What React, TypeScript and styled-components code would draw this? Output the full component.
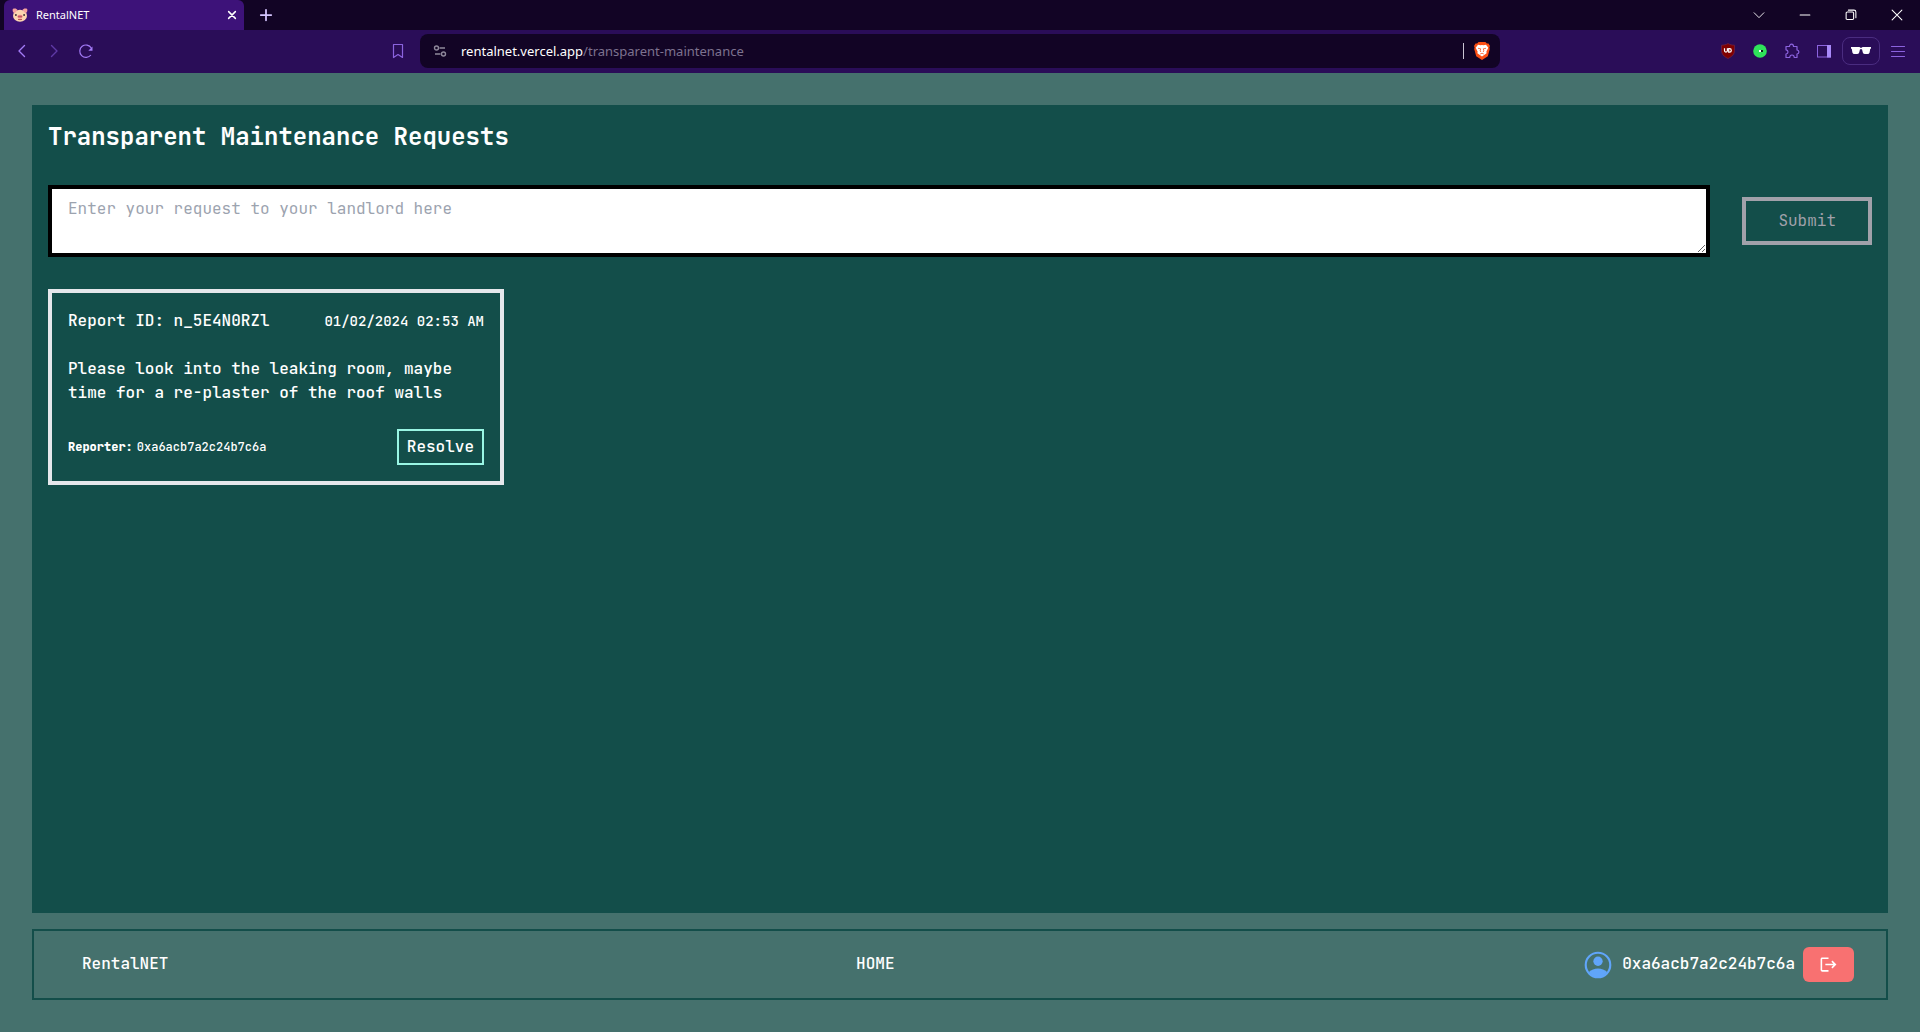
import React, { useState } from "react";
import styled, { createGlobalStyle } from "styled-components";
import { MdLogout } from "react-icons/md";

const mono = `"JetBrains Mono", "DejaVu Sans Mono", "Liberation Mono", monospace`;
const system = `"Segoe UI", "Noto Sans", "Open Sans", sans-serif`;

const GlobalStyle = createGlobalStyle`
  *, *::before, *::after { box-sizing: border-box; }
  body { margin: 0; background: #45716d; }
  button, textarea { font: inherit; color: inherit; }
  h1, p { margin: 0; }
`;

const Window = styled.div`
  display: flex;
  flex-direction: column;
  min-height: 100vh;
`;

/* Browser frame */

const TabStrip = styled.header`
  display: flex;
  align-items: stretch;
  height: 30px;
  padding-left: 4px;
  background: #120425;
  color: #fff;
  font-family: ${system};
`;

const Tab = styled.div`
  display: flex;
  align-items: center;
  gap: 8px;
  width: 240px;
  padding: 0 4px 0 8px;
  border-radius: 6px 6px 0 0;
  background: #3d1279;
  font-size: 11px;
  line-height: 16px;
`;

const TabTitle = styled.span`
  flex: 1;
`;

const FrameButton = styled.button<{ $width: number; $tone?: string }>`
  display: flex;
  align-items: center;
  justify-content: center;
  width: ${(p) => p.$width}px;
  height: 100%;
  padding: 0;
  border: 0;
  background: none;
  color: ${(p) => p.$tone ?? "#fff"};
`;

const WindowControls = styled.div`
  display: flex;
  margin-left: auto;
`;

const Toolbar = styled.nav`
  display: grid;
  grid-template-columns: 1fr minmax(0, 1080px) 1fr;
  align-items: center;
  height: 43px;
  padding-bottom: 1px;
  background: #2a0d58;
  font-family: ${system};
`;

const ToolGroup = styled.div<{ $end?: boolean }>`
  display: flex;
  align-items: center;
  justify-content: ${(p) => (p.$end ? "flex-end" : "flex-start")};
  height: 32px;
  padding: 0 6px;
`;

const Spacer = styled.span`
  flex: 1;
`;

const AddressBar = styled.div`
  display: flex;
  align-items: center;
  height: 34px;
  padding-left: 4px;
  border-radius: 8px;
  background: #120425;
`;

const Address = styled.div`
  flex: 1;
  padding-left: 5px;
  color: #7d728f;
  font-size: 13px;
  line-height: 20px;
  white-space: nowrap;
  overflow: hidden;
`;

const Host = styled.span`
  color: #fff;
`;

const Divider = styled.span`
  width: 1px;
  height: 16px;
  background: #c9c4d2;
`;

const PrivatePill = styled.button`
  display: flex;
  align-items: center;
  justify-content: center;
  width: 38px;
  height: 28px;
  margin: 0 2px;
  padding: 0;
  border: 1px solid #4a2c80;
  border-radius: 8px;
  background: none;
`;

/* Page */

const Page = styled.div`
  display: flex;
  flex: 1;
  flex-direction: column;
  gap: 16px;
  padding: 32px;
  color: #fff;
  font-family: ${mono};
  font-size: 16px;
  line-height: 24px;
`;

const Panel = styled.main`
  flex: 1;
  padding: 16px;
  background: #134e4a;
`;

const Title = styled.h1`
  font-size: 24px;
  line-height: 32px;
  font-weight: 700;
`;

const RequestForm = styled.form`
  display: flex;
  align-items: center;
  gap: 32px;
  margin: 32px 0;
`;

const RequestBox = styled.textarea`
  flex: 1;
  display: block;
  min-width: 0;
  padding: 8px 16px;
  border: 4px solid #000;
  border-radius: 0;
  background: #fff;
  color: #111827;
  resize: both;
  &::placeholder { color: #9ca3af; opacity: 1; }
`;

const SubmitButton = styled.button`
  padding: 8px 32px;
  border: 4px solid #a1a1aa;
  background: none;
  color: #a1a1aa;
`;

const Reports = styled.div`
  display: grid;
  grid-template-columns: repeat(4, minmax(0, 1fr));
`;

const Card = styled.article`
  display: flex;
  flex-direction: column;
  gap: 24px;
  padding: 16px;
  border: 4px solid #e5e7eb;
  font-weight: 500;
`;

const CardRow = styled.div`
  display: flex;
  align-items: center;
  justify-content: space-between;
`;

const ReportTime = styled.time`
  font-size: 14px;
`;

const Reporter = styled.p`
  display: flex;
  gap: 4px;
  font-size: 12px;
`;

const ReporterLabel = styled.strong`
  font-weight: 800;
`;

const ResolveButton = styled.button`
  padding: 4px 8px;
  border: 2px solid #99f6e4;
  background: none;
`;

const Footer = styled.footer`
  display: flex;
  align-items: center;
  justify-content: space-between;
  padding: 16px 32px;
  border: 2px solid #134e4a;
  font-weight: 500;
`;

const NavLink = styled.a<{ $inset?: boolean }>`
  margin-left: ${(p) => (p.$inset ? "16px" : "0")};
  padding-bottom: 1px;
  color: inherit;
  text-decoration: none;
`;

const Account = styled.div`
  display: flex;
  align-items: center;
  gap: 8px;
`;

const AccountName = styled.span`
  padding-bottom: 1px;
`;

const LogoutButton = styled.button`
  display: flex;
  padding: 8px 16px;
  border: 0;
  border-radius: 6px;
  background: #f87171;
`;

/* Icons */

type StrokeIconProps = { d: string; size?: number; width?: number; color?: string };

const StrokeIcon = ({ d, size = 16, width = 1, color = "currentColor" }: StrokeIconProps) => (
  <svg width={size} height={size} viewBox="0 0 16 16" fill="none" stroke={color} strokeWidth={width} strokeLinecap="round" strokeLinejoin="round" aria-hidden="true">
    <path d={d} />
  </svg>
);

const PigIcon = () => (
  <svg width="16" height="16" viewBox="0 0 16 16" aria-hidden="true">
    <ellipse cx="8" cy="8.800" rx="7" ry="6" fill="#fcd5b0" />
    <path d="M.8 2C2.500 1 5 1.600 5.500 3L2.500 6.500C.8 5.500.3 3.500.8 2zM15.200 2C13.500 1 11 1.600 10.500 3L13.500 6.500C15.200 5.500 15.700 3.500 15.200 2z" fill="#f5a3a0" />
    <ellipse cx="8" cy="9.600" rx="2.700" ry="1.800" fill="#e87f83" />
    <circle cx="7" cy="9.600" r=".6" fill="#8a2f3c" />
    <circle cx="9" cy="9.600" r=".6" fill="#8a2f3c" />
    <circle cx="3.900" cy="8" r=".9" fill="#33242c" />
    <circle cx="12.100" cy="8" r=".9" fill="#33242c" />
    <path d="M6 12.300q2 .8 4 0" stroke="#b9484f" fill="none" />
  </svg>
);

const ReloadIcon = () => (
  <svg width="16" height="16" viewBox="0 0 16 16" fill="none" aria-hidden="true">
    <path d="M12.900 12A6.200 6.200 0 1 1 13.300 5" stroke="#a37bf7" strokeWidth="1.200" />
    <path d="M14.500 3.500v4.200h-4.200z" fill="#a37bf7" />
  </svg>
);

const SiteIcon = () => (
  <svg width="14" height="14" viewBox="0 0 14 14" fill="none" stroke="#8f899b" strokeWidth="1.400" aria-hidden="true">
    <circle cx="3.500" cy="4" r="2" />
    <path d="M6.500 4H12M2 10h5.500" />
    <circle cx="10.500" cy="10" r="2" />
  </svg>
);

const BraveIcon = () => (
  <svg width="16" height="18" viewBox="0 0 16 18" aria-hidden="true">
    <path d="M4.600 0h6.800l1.500 1.500 1.600-.1L16 4l-.6 1.600.4 1.400-2 7.200L8 18l-5.800-3.800-2-7.200.4-1.400L0 4l1.500-2.600 1.600.1z" fill="#fb4f14" />
    <path d="M4 2.800 6.500 3.300 8 3l1.500.3L12 2.800l2.300 3-1.900 3.800.2 1.600-2.100 1.500L8 14.600l-2.500-1.900-2.100-1.500.2-1.600L1.700 5.800z" fill="#fff" />
    <path d="m4 6.300 2.700.5-.5 2 .7 1.200M12 6.300l-2.700.5.5 2-.7 1.200M6.200 12 8 11.200l1.800.8" stroke="#fb4f14" strokeWidth=".8" fill="none" />
  </svg>
);

const ShieldIcon = () => (
  <svg width="16" height="16" viewBox="0 0 16 16" fill="none" aria-hidden="true">
    <path d="M8 .5c2 1.300 4 1.600 6.500 1.700v5.300c0 3.700-2.500 6-6.500 8-4-2-6.500-4.300-6.500-8V2.200C4 2.100 6 1.800 8 .5z" fill="#800000" stroke="#6d2244" strokeWidth=".8" />
    <path d="M4.500 5.300v2.300a1.400 1.400 0 0 0 2.900 0V5.300M8.700 5.700h.9a1.700 1.700 0 0 1 0 3.400h-.9z" stroke="#fff" strokeWidth="1.200" />
  </svg>
);

const GreenDotIcon = () => (
  <svg width="14" height="14" viewBox="0 0 14 14" aria-hidden="true">
    <circle cx="7" cy="7" r="6.800" fill="#2fe35a" />
    <path d="M6 6h2v2H6z" fill="#fff" />
    <path d="M8 6h2v2H8z" fill="#0b2412" />
  </svg>
);

const PanelIcon = () => (
  <svg width="14" height="14" viewBox="0 0 14 14" aria-hidden="true">
    <rect x=".5" y="1.500" width="13" height="11.500" fill="none" stroke="#8b63de" />
    <path d="M10 1h4v12.500h-4z" fill="#a98afa" />
  </svg>
);

const GlassesIcon = () => (
  <svg width="20" height="8" viewBox="0 0 20 8" fill="#fff" aria-hidden="true">
    <path d="M0 0h8.500l.8.700h1.400l.8-.7H20v1.600l-.8.4-.6 3.500Q18.200 7 16.500 7H14q-1.700 0-2.200-1.500L11 2.300H9L8.200 5.500Q7.700 7 6 7H3.500Q1.800 7 1.400 5.500L.8 2 0 1.600z" />
  </svg>
);

const UserIcon = () => (
  <svg width="32" height="32" viewBox="0 0 24 24" fill="#60a5fa" aria-hidden="true">
    <circle cx="12" cy="12" r="9.200" fill="none" stroke="#60a5fa" strokeWidth="1.600" />
    <circle cx="12" cy="9.200" r="3.500" />
    <path d="M5.200 17.300C7 15.700 9.300 14.700 12 14.700s5 1 6.800 2.600C17.500 19.800 15 21.300 12 21.300s-5.500-1.500-6.800-4z" />
  </svg>
);

export default function App() {
  const [request, setRequest] = useState("");

  return (
    <Window>
      <GlobalStyle />
      <TabStrip>
        <Tab>
          <PigIcon />
          <TabTitle>RentalNET</TabTitle>
          <FrameButton $width={16} aria-label="Close tab">
            <StrokeIcon size={12} width={2} d="M3.500 3.500l9 9M12.500 3.500l-9 9" />
          </FrameButton>
        </Tab>
        <FrameButton $width={44} $tone="#d5c5ff" aria-label="New tab">
          <StrokeIcon size={14} width={2} d="M8 2v12M2 8h12" />
        </FrameButton>
        <WindowControls>
          <FrameButton $width={46} aria-label="Search tabs">
            <StrokeIcon size={12} width={1.2} d="M1.500 5l6.500 6.500L14.500 5" />
          </FrameButton>
          <FrameButton $width={46} aria-label="Minimize">
            <StrokeIcon size={12} width={1.4} d="M1.500 8h13" />
          </FrameButton>
          <FrameButton $width={46} aria-label="Restore">
            <StrokeIcon size={12} width={1.4} d="M3 4h7a1.500 1.500 0 0 1 1.500 1.500v7a1.500 1.500 0 0 1-1.500 1.500H3a1.500 1.500 0 0 1-1.500-1.500v-7A1.500 1.500 0 0 1 3 4zM4.500 1.500h7.500a2.500 2.500 0 0 1 2.500 2.500v7.500" />
          </FrameButton>
          <FrameButton $width={46} aria-label="Close window">
            <StrokeIcon size={12} width={1.4} d="M1.500 1.500l13 13M14.500 1.500l-13 13" />
          </FrameButton>
        </WindowControls>
      </TabStrip>

      <Toolbar aria-label="Browser">
        <ToolGroup>
          <FrameButton $width={32} $tone="#a37bf7" aria-label="Back">
            <StrokeIcon width={1.4} d="M10.500 2.500L5 8l5.500 5.500" />
          </FrameButton>
          <FrameButton $width={32} $tone="#5f3aa6" aria-label="Forward">
            <StrokeIcon width={1.4} d="M5.500 2.500L11 8l-5.500 5.500" />
          </FrameButton>
          <FrameButton $width={32} aria-label="Reload">
            <ReloadIcon />
          </FrameButton>
          <Spacer />
          <FrameButton $width={32} $tone="#8b63de" aria-label="Bookmark">
            <StrokeIcon width={1.2} d="M3.500 1.500h9v13L8 11.500l-4.500 3z" />
          </FrameButton>
        </ToolGroup>
        <AddressBar>
          <FrameButton $width={32} aria-label="Site information">
            <SiteIcon />
          </FrameButton>
          <Address role="textbox" aria-label="Address" tabIndex={0}>
            <Host>rentalnet.vercel.app</Host>/transparent-maintenance
          </Address>
          <Divider />
          <FrameButton $width={36} aria-label="Shields">
            <BraveIcon />
          </FrameButton>
        </AddressBar>
        <ToolGroup $end>
          <FrameButton $width={32} aria-label="Ad blocker">
            <ShieldIcon />
          </FrameButton>
          <FrameButton $width={32} aria-label="Dark reader">
            <GreenDotIcon />
          </FrameButton>
          <FrameButton $width={32} $tone="#8b63de" aria-label="Extensions">
            <StrokeIcon width={1.2} d="M2 3.500h3.500C5.500 2 6.300 1.200 7.500 1.200S9.500 2 9.500 3.500H13V7c1.200.2 1.900.9 1.900 2s-.7 1.800-1.900 2v3.500h-2.700C10.200 13 9.300 12 8 12s-2.200 1-2.300 2.500H2V11c1.300-.2 2-1 2-2.100S3.300 7 2 6.800z" />
          </FrameButton>
          <FrameButton $width={32} aria-label="Side panel">
            <PanelIcon />
          </FrameButton>
          <PrivatePill aria-label="Private window">
            <GlassesIcon />
          </PrivatePill>
          <FrameButton $width={32} $tone="#8b63de" aria-label="Menu">
            <StrokeIcon width={1.2} d="M1.500 3.500h13M1.500 8.500h13M1.500 13.500h13" />
          </FrameButton>
        </ToolGroup>
      </Toolbar>

      <Page>
        <Panel>
          <Title>Transparent Maintenance Requests</Title>
          <RequestForm onSubmit={(e) => e.preventDefault()}>
            <RequestBox
              rows={2}
              aria-label="Maintenance request"
              placeholder="Enter your request to your landlord here"
              value={request}
              onChange={(e) => setRequest(e.target.value)}
            />
            <SubmitButton type="submit" disabled={!request}>Submit</SubmitButton>
          </RequestForm>
          <Reports>
            <Card>
              <CardRow>
                <p>Report ID: n_5E4N0RZl</p>
                <ReportTime dateTime="2024-01-02T02:53">01/02/2024 02:53 AM</ReportTime>
              </CardRow>
              <p>Please look into the leaking room, maybe time for a re-plaster of the roof walls</p>
              <CardRow>
                <Reporter>
                  <ReporterLabel>Reporter:</ReporterLabel>
                  <span>0xa6acb7a2c24b7c6a</span>
                </Reporter>
                <ResolveButton>Resolve</ResolveButton>
              </CardRow>
            </Card>
          </Reports>
        </Panel>
        <Footer>
          <NavLink href="#rentalnet" $inset>RentalNET</NavLink>
          <NavLink href="#home">HOME</NavLink>
          <Account>
            <UserIcon />
            <AccountName>0xa6acb7a2c24b7c6a</AccountName>
            <LogoutButton aria-label="Log out">
              <MdLogout size={19} />
            </LogoutButton>
          </Account>
        </Footer>
      </Page>
    </Window>
  );
}
